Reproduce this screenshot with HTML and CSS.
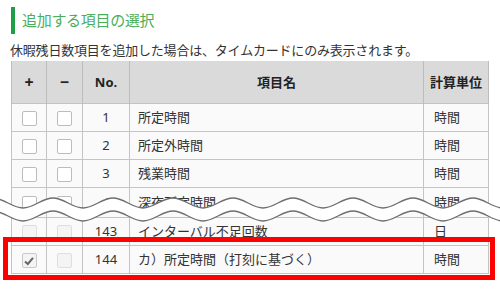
FILE: index.html
```html
<!DOCTYPE html>
<html lang="ja">
<head>
    <meta charset="UTF-8">
    <title>追加する項目の選択</title>
    <link rel="stylesheet" href="styles.css">
</head>
<body>
    <div class="page">
        <h2 class="section-title">追加する項目の選択</h2>
        <p class="note">休暇残日数項目を追加した場合は、タイムカードにのみ表示されます。</p>

        <table class="item-table">
            <colgroup>
                <col class="c-add">
                <col class="c-del">
                <col class="c-no">
                <col class="c-name">
                <col class="c-unit">
            </colgroup>
            <thead>
                <tr>
                    <th class="sign">+</th>
                    <th class="sign">−</th>
                    <th>No.</th>
                    <th>項目名</th>
                    <th>計算単位</th>
                </tr>
            </thead>
            <tbody>
                <tr>
                    <td class="chk"><span class="box"></span></td>
                    <td class="chk"><span class="box"></span></td>
                    <td class="no">1</td>
                    <td class="name">所定時間</td>
                    <td class="unit">時間</td>
                </tr>
                <tr>
                    <td class="chk"><span class="box"></span></td>
                    <td class="chk"><span class="box"></span></td>
                    <td class="no">2</td>
                    <td class="name">所定外時間</td>
                    <td class="unit">時間</td>
                </tr>
                <tr>
                    <td class="chk"><span class="box"></span></td>
                    <td class="chk"><span class="box"></span></td>
                    <td class="no">3</td>
                    <td class="name">残業時間</td>
                    <td class="unit">時間</td>
                </tr>
                <tr class="cut">
                    <td class="chk"><span class="box"></span></td>
                    <td class="chk"><span class="box"></span></td>
                    <td class="no">4</td>
                    <td class="name">深夜所定時間</td>
                    <td class="unit">時間</td>
                </tr>
                <tr>
                    <td class="chk"><span class="box off"></span></td>
                    <td class="chk"><span class="box off"></span></td>
                    <td class="no">143</td>
                    <td class="name">インターバル不足回数</td>
                    <td class="unit">日</td>
                </tr>
                <tr>
                    <td class="chk">
                        <span class="box checked">
                            <svg width="12" height="12" viewBox="0 0 12 12"><path d="M2 6.5 L4.8 9 L10 2.8" fill="none" stroke="#666" stroke-width="2"/></svg>
                        </span>
                    </td>
                    <td class="chk"><span class="box off"></span></td>
                    <td class="no">144</td>
                    <td class="name">カ）所定時間（打刻に基づく）</td>
                    <td class="unit">時間</td>
                </tr>
            </tbody>
        </table>

        <!-- 省略の波線 -->
        <svg class="wave" width="500" height="40" viewBox="0 0 500 40">
            <path fill="#fff" fill-rule="evenodd" d="M-37 18 C-26.2 18 -17.8 8 -7 8 S12.2 18 23 18 S42.2 8 53 8 S72.2 18 83 18 S102.2 8 113 8 S132.2 18 143 18 S162.2 8 173 8 S192.2 18 203 18 S222.2 8 233 8 S252.2 18 263 18 S282.2 8 293 8 S312.2 18 323 18 S342.2 8 353 8 S372.2 18 383 18 S402.2 8 413 8 S432.2 18 443 18 S462.2 8 473 8 S492.2 18 503 18 S522.2 8 533 8 L533 40 L-37 40 Z M-37 31 C-26.2 31 -17.8 21 -7 21 S12.2 31 23 31 S42.2 21 53 21 S72.2 31 83 31 S102.2 21 113 21 S132.2 31 143 31 S162.2 21 173 21 S192.2 31 203 31 S222.2 21 233 21 S252.2 31 263 31 S282.2 21 293 21 S312.2 31 323 31 S342.2 21 353 21 S372.2 31 383 31 S402.2 21 413 21 S432.2 31 443 31 S462.2 21 473 21 S492.2 31 503 31 S522.2 21 533 21 L533 40 L-37 40 Z"/>
            <path fill="none" stroke="#6e6e6e" stroke-width="1.4" d="M-37 18 C-26.2 18 -17.8 8 -7 8 S12.2 18 23 18 S42.2 8 53 8 S72.2 18 83 18 S102.2 8 113 8 S132.2 18 143 18 S162.2 8 173 8 S192.2 18 203 18 S222.2 8 233 8 S252.2 18 263 18 S282.2 8 293 8 S312.2 18 323 18 S342.2 8 353 8 S372.2 18 383 18 S402.2 8 413 8 S432.2 18 443 18 S462.2 8 473 8 S492.2 18 503 18 S522.2 8 533 8"/>
            <path fill="none" stroke="#6e6e6e" stroke-width="1.4" d="M-37 31 C-26.2 31 -17.8 21 -7 21 S12.2 31 23 31 S42.2 21 53 21 S72.2 31 83 31 S102.2 21 113 21 S132.2 31 143 31 S162.2 21 173 21 S192.2 31 203 31 S222.2 21 233 21 S252.2 31 263 31 S282.2 21 293 21 S312.2 31 323 31 S342.2 21 353 21 S372.2 31 383 31 S402.2 21 413 21 S432.2 31 443 31 S462.2 21 473 21 S492.2 31 503 31 S522.2 21 533 21"/>
        </svg>

        <!-- 強調枠 -->
        <div class="highlight"></div>
    </div>
</body>
</html>
```

FILE: styles.css
```css
* {
    margin: 0;
    padding: 0;
    box-sizing: border-box;
}

body {
    font-family: "Noto Sans", "Noto Sans CJK JP", sans-serif;
    color: #333;
    background-color: #fff;
}

.page {
    position: relative;
    width: 500px;
    height: 289px;
    overflow: hidden;
}

/* 見出し */
.section-title {
    margin: 7px 0 0 11px;
    height: 27px;
    border-left: 4px solid #1f9e45;
    padding-left: 7px;
    font-size: 15px;
    font-weight: normal;
    line-height: 27px;
    letter-spacing: -0.3px;
    color: #4aae5c;
}

.note {
    margin-top: 7px;
    padding-left: 10px;
    font-size: 13px;
    line-height: 19px;
    letter-spacing: -0.2px;
}

/* 一覧 */
.item-table {
    margin: 1px 0 0 11px;
    width: 477px;
    table-layout: fixed;
    border-collapse: collapse;
    font-size: 13px;
}

.c-add { width: 35px; }
.c-del { width: 36px; }
.c-no { width: 47px; }
.c-name { width: 294px; }
.c-unit { width: 65px; }

th {
    height: 42px;
    background-color: #d9dad9;
    font-weight: bold;
    color: #222;
    text-align: center;
    border-left: 1px solid #bdbdbd;
    border-right: 1px solid #bdbdbd;
}

th.sign {
    font-size: 16px;
}

td {
    height: 28px;
    background-color: #fafafa;
    border: 1px solid #c4c4c4;
    line-height: 18px;
}

.chk,
.no {
    text-align: center;
}

.name {
    padding-left: 8px;
}

.unit {
    padding-left: 10px;
}

.cut td {
    height: 30px;
}

.box {
    display: inline-flex;
    align-items: center;
    justify-content: center;
    width: 15px;
    height: 15px;
    vertical-align: middle;
    background-color: #fff;
    border: 1px solid #bcbcbc;
    border-radius: 2px;
}

.box.off {
    background-color: #f4f4f4;
    border-color: #dedede;
}

.box.checked {
    background-color: #f4f4f4;
    border-color: #c9c9c9;
}

/* 省略の波線 */
.wave {
    position: absolute;
    left: 0;
    top: 190px;
}

/* 強調枠 */
.highlight {
    position: absolute;
    left: 3px;
    top: 237px;
    width: 492px;
    height: 43px;
    border: 5px solid #f00;
}
```
